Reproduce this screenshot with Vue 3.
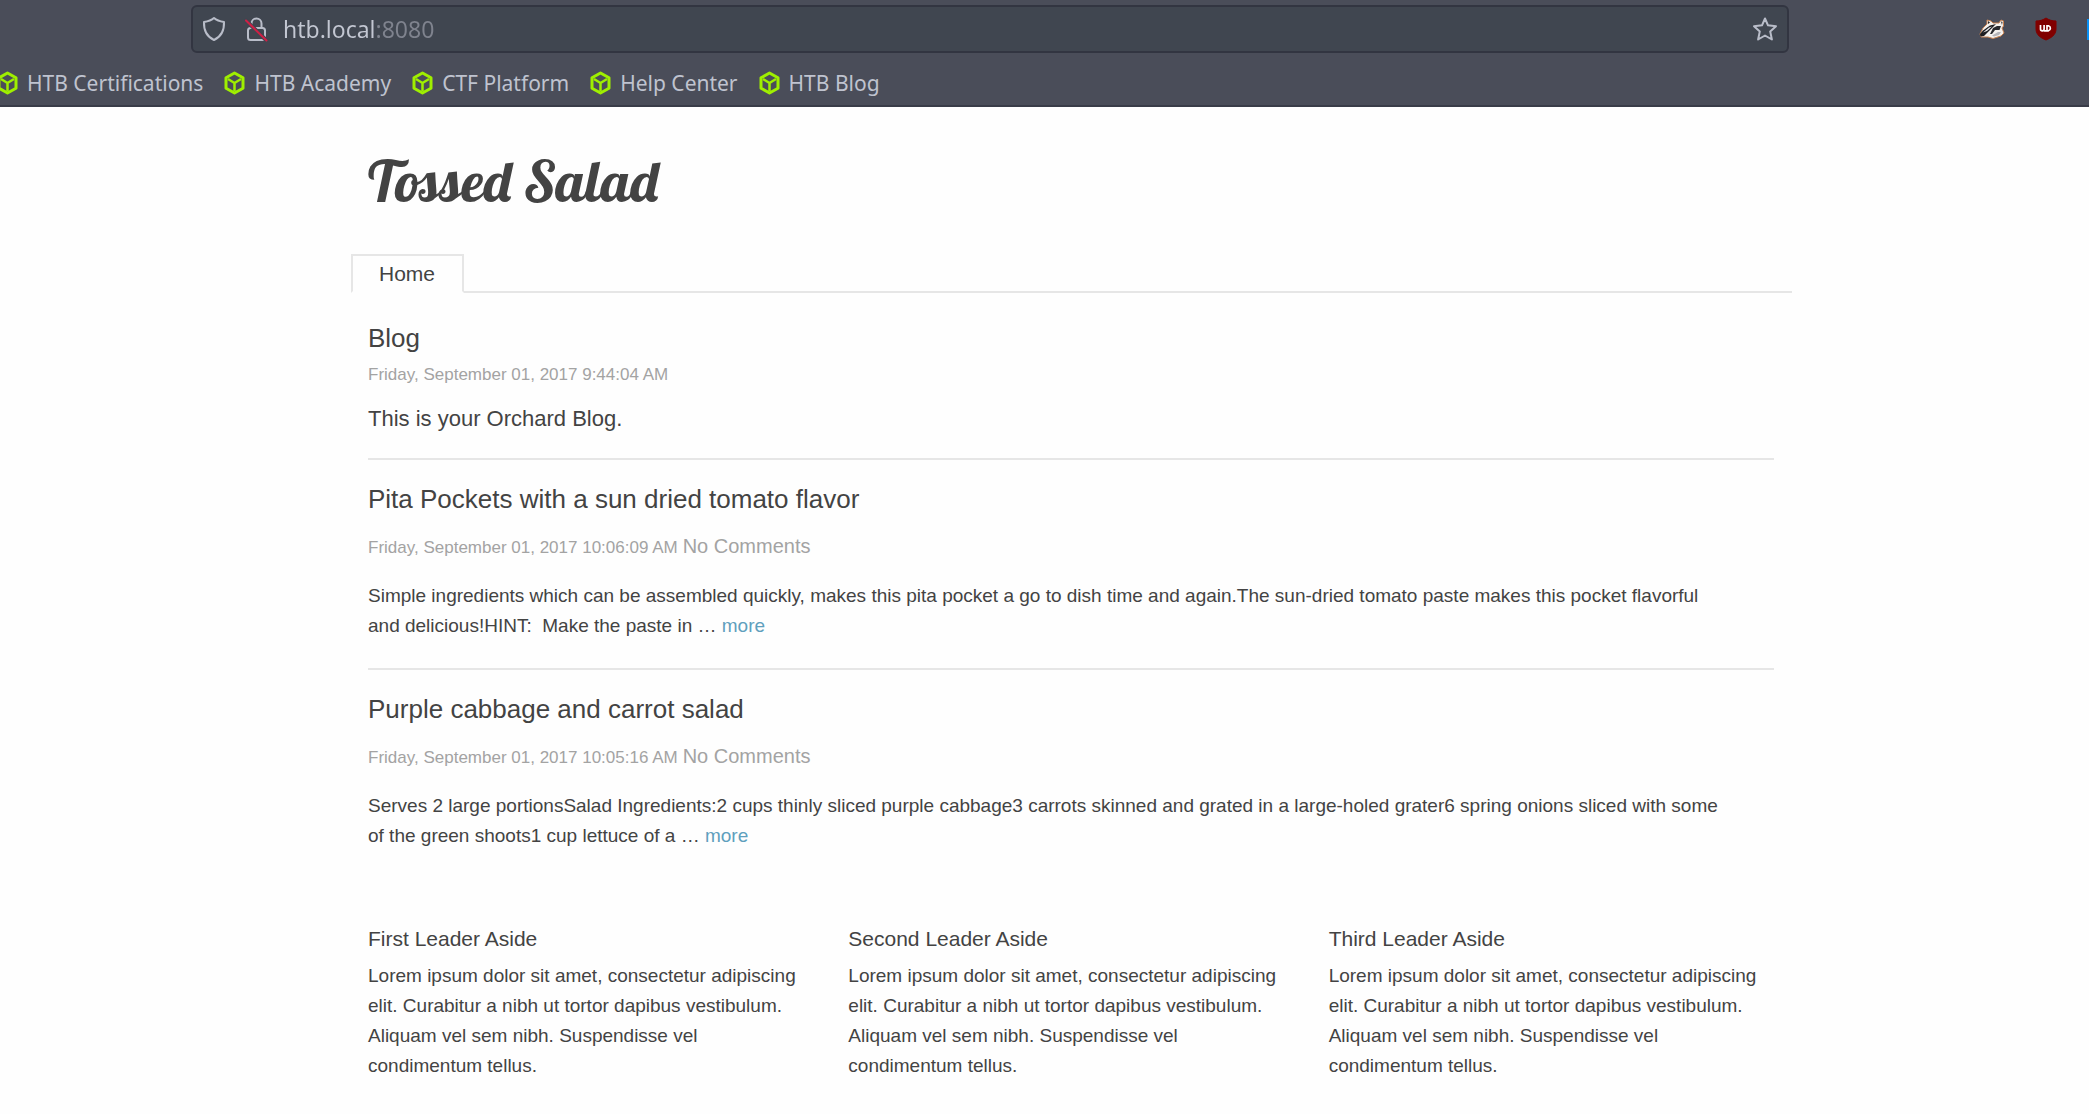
<script setup>
import { ref } from 'vue'

const address = ref('htb.local:8080')

const bookmarks = ['HTB Certifications', 'HTB Academy', 'CTF Platform', 'Help Center', 'HTB Blog']

const posts = [
  {
    title: 'Pita Pockets with a sun dried tomato flavor',
    date: 'Friday, September 01, 2017 10:06:09 AM',
    lines: [
      'Simple ingredients which can be assembled quickly, makes this pita pocket a go to dish time and again.The sun-dried tomato paste makes this pocket flavorful',
      'and delicious!HINT:\u00a0 Make the paste in …',
    ],
  },
  {
    title: 'Purple cabbage and carrot salad',
    date: 'Friday, September 01, 2017 10:05:16 AM',
    lines: [
      'Serves 2 large portionsSalad Ingredients:2 cups thinly sliced purple cabbage3 carrots skinned and grated in a large-holed grater6 spring onions sliced with some',
      'of the green shoots1 cup lettuce of a …',
    ],
  },
]

const lorem =
  'Lorem ipsum dolor sit amet, consectetur adipiscing\nelit. Curabitur a nibh ut tortor dapibus vestibulum.\nAliquam vel sem nibh. Suspendisse vel\ncondimentum tellus.'
const asides = ['First Leader Aside', 'Second Leader Aside', 'Third Leader Aside']
</script>

<template>
  <div class="window">
    <div class="chrome">
      <div class="toolbar">
        <div class="urlbar">
          <button class="icon-btn" aria-label="Tracking protection">
            <svg width="24" height="26" viewBox="0 0 24 26" fill="none" stroke="#b9bdc9" stroke-width="2" stroke-linejoin="round">
              <path d="M12 2 C14.500 4.200 18 5.400 22 6 C22.300 13 20.500 20 12 24 C3.500 20 1.700 13 2 6 C6 5.400 9.500 4.200 12 2Z" />
            </svg>
          </button>
          <button class="icon-btn" aria-label="Connection not secure">
            <svg width="24" height="26" viewBox="0 0 24 26" fill="none" stroke="#b9bdc9" stroke-width="2" stroke-linecap="round">
              <path d="M7.500 12V7.500a5 5 0 0 1 10 0V12" />
              <rect x="4" y="12" width="17" height="12" rx="2.500" />
              <path d="M2 4.500 22.500 24.500" stroke="#404650" stroke-width="4" />
              <path d="M2 4.500 22.500 24.500" stroke="#cf1f45" />
            </svg>
          </button>
          <input v-model="address" class="address" type="text" aria-label="Address" spellcheck="false" />
          <button class="icon-btn" aria-label="Bookmark this page">
            <svg width="26" height="26" viewBox="0 0 26 26" fill="none" stroke="#b9bdc9" stroke-width="2" stroke-linejoin="round">
              <path d="M13 2.500 16 9.300 24 10.200 18.200 15.400 19.900 23.500 13 19.500 6.100 23.500 7.800 15.400 2 10.200 10 9.300Z" />
            </svg>
          </button>
        </div>
        <div class="extensions">
          <button class="icon-btn" aria-label="Privacy Badger">
            <svg width="26" height="22" viewBox="0 0 26 22">
              <path d="M1 16 4 10 8 6 8 2 12 3 14 5 20 5 22 2 24.500 3 24.500 8 23 10 25 15 22 18 14 20.500 9 19 2 19Z" fill="#f4f1ee" stroke="#c98352" stroke-width="1" stroke-linejoin="round" />
              <path d="M1 16 4 12.500 11 7.500 17 6 13 10 8 15 5 18 1.500 18.500Z" fill="#1d1d20" />
              <path d="M4 14.500 10 9.500 13 8.500 8 13Z" fill="#e8e8ea" />
              <path d="M11 16 14 10 18 8 22 8 20.500 12 16 12 13 16Z" fill="#29292d" />
              <path d="M9 3 11 4.500 9 6ZM22 3.500 23.500 4 23 7Z" fill="#2a2624" />
              <path d="M13 17.500 19 14 22 14 20 17 15 18.500Z" fill="#b5b5b9" />
            </svg>
          </button>
          <button class="icon-btn" aria-label="uBlock Origin">
            <svg width="22" height="24" viewBox="0 0 22 24">
              <path d="M11 1 C14 3 17 4 21 4 V12 C21 18 16 21 11 23 C6 21 1 18 1 12 V4 C5 4 8 3 11 1Z" fill="#800000" stroke="#800000" />
              <path d="M5.500 8V12a1.800 1.800 0 0 0 3.600 0V8M9.100 13.800H13.500a2.600 2.600 0 0 0 0-5H12V13" fill="none" stroke="#fff" stroke-width="1.700" />
            </svg>
          </button>
          <span class="cut-off"></span>
        </div>
      </div>
      <nav class="bookmarks" aria-label="Bookmarks">
        <a v-for="name in bookmarks" :key="name" href="#">
          <svg width="21" height="24" viewBox="0 0 21 24" fill="none" stroke="#9fef00" stroke-width="3" stroke-linejoin="round">
            <path d="M10.500 2 19 6.800V17.200L10.500 22 2 17.200V6.800Z" />
            <path d="M4 8 10.500 12 17 8M10.500 12V20" stroke-width="2.500" />
          </svg>
          <span>{{ name }}</span>
        </a>
      </nav>
    </div>

    <div class="page">
      <header>
        <h1 class="brand"><a href="#">Tossed Salad</a></h1>
        <nav class="menu"><a href="#">Home</a></nav>
      </header>
      <main>
        <section class="intro">
          <h2>Blog</h2>
          <p class="date">Friday, September 01, 2017 9:44:04 AM</p>
          <p class="lead">This is your Orchard Blog.</p>
        </section>
        <article v-for="post in posts" :key="post.title">
          <h2>{{ post.title }}</h2>
          <p class="meta"><span class="date">{{ post.date }}</span><span>No Comments</span></p>
          <p class="copy">
            <span>{{ post.lines[0] }}</span><br />
            <span>{{ post.lines[1] }}</span>&#32;<a href="#">more</a>
          </p>
        </article>
      </main>
      <div class="asides">
        <aside v-for="title in asides" :key="title">
          <h3>{{ title }}</h3>
          <p class="copy broken">{{ lorem }}</p>
        </aside>
      </div>
    </div>
  </div>
</template>

<style>
body {
  margin: 0;
  background: #fefefe;
}
</style>

<style scoped>
.window {
  overflow-x: hidden;
  font-family: "Liberation Sans", Arial, sans-serif;
  color: #434343;
}
h1, h2, h3, p {
  margin: 0;
  font-weight: 400;
}
a {
  color: inherit;
  text-decoration: none;
}
svg {
  display: block;
  flex: none;
}
.chrome {
  box-sizing: border-box;
  height: 107px;
  padding-top: 5px;
  background: #4a4d59;
  border-bottom: 2px solid #393c48;
  font-family: "Noto Sans", sans-serif;
  color: #bfc3cf;
}
.toolbar {
  display: flex;
  align-items: center;
  padding-left: 191px;
}
.urlbar {
  box-sizing: border-box;
  flex: 1;
  display: flex;
  align-items: center;
  height: 48px;
  padding: 0 9px;
  background: #404650;
  border: 2px solid #323541;
  border-radius: 6px;
}
.icon-btn {
  padding: 0;
  border: 0;
  background: none;
}
.urlbar .icon-btn + .icon-btn {
  margin-left: 18px;
}
.address {
  flex: 1;
  min-width: 0;
  height: 40px;
  margin-left: 15px;
  padding: 0;
  border: 0;
  outline: 0;
  font-family: inherit;
  font-size: 23px;
  color: transparent;
  background: linear-gradient(90deg, #c3c7d2 94px, #7f838e 94px);
  background-clip: text;
}
.extensions {
  display: flex;
  align-items: center;
  gap: 30px;
  padding-left: 190px;
}
.cut-off {
  width: 2px;
  height: 21px;
  background: #0a91f5;
}
.bookmarks {
  display: flex;
  gap: 21px;
  margin: 15px 0 0 -3px;
}
.bookmarks a {
  display: flex;
  align-items: center;
  gap: 9px;
  font-size: 21px;
  line-height: 30px;
  white-space: nowrap;
}
.page {
  padding: 44px 297px 33px 351px;
}
.brand {
  padding-left: 17px;
  font: 400 57px/60px Lobster, "Liberation Serif", serif;
}
.menu {
  display: flex;
  margin-top: 43px;
  border-bottom: 2px solid #e6e6e6;
}
.menu a {
  margin-bottom: -2px;
  padding: 3px 27px 2px 26px;
  border: 2px solid #e6e6e6;
  border-bottom-color: #fefefe;
  font-size: 21px;
  line-height: 30px;
}
main {
  padding: 30px 18px 0 17px;
}
h2 {
  font-size: 26px;
  line-height: 30px;
}
.intro {
  padding-bottom: 24px;
}
.date {
  font-size: 17px;
  line-height: 30px;
  color: #a3a3a3;
}
.intro .date {
  margin-top: 7px;
}
.lead {
  margin-top: 14px;
  font-size: 22px;
  line-height: 30px;
}
article {
  padding: 24px 0 27px;
  border-top: 2px solid #e6e6e6;
}
.meta {
  display: flex;
  align-items: baseline;
  gap: 5px;
  margin: 17px 0 18px;
  font-size: 20px;
  line-height: 30px;
  color: #a3a3a3;
}
.copy {
  font-size: 19px;
  line-height: 30px;
}
.broken {
  white-space: pre-line;
}
.copy a {
  color: #5f9fbd;
}
.asides {
  display: grid;
  grid-template-columns: repeat(3, 1fr);
  padding-top: 46px;
}
aside {
  padding-left: 17px;
}
h3 {
  margin-bottom: 7px;
  font-size: 21px;
  line-height: 30px;
}
</style>
